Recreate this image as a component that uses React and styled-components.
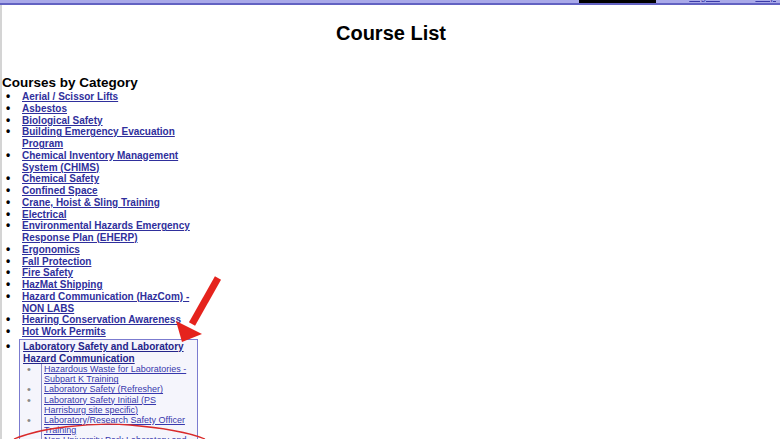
import React from 'react';
import styled, { createGlobalStyle } from 'styled-components';

const GlobalStyle = createGlobalStyle`
  body {
    margin: 0;
    background: #fff;
    font-family: "Liberation Sans", Arial, sans-serif;
  }
`;

const Page = styled.div`
  position: relative;
  height: 439px;
  overflow: hidden;
  background: #fff;
`;

const TopBar = styled.div`
  height: 3px;
  background: #a9a9e9;
  border-bottom: 2px solid #6262c2;
  display: flex;
  justify-content: flex-end;
  align-items: flex-end;
  overflow: hidden;
  padding-right: 4px;
`;

const BarText = styled.span`
  font-size: 10px;
  line-height: 10px;
  color: ${(p) => (p.$link ? '#3a3aa8' : '#55557a')};
  text-decoration: ${(p) => (p.$link ? 'underline' : 'none')};
  margin-left: ${(p) => p.$gap || 0}px;
  margin-bottom: 1px;
  white-space: pre;
`;

const BarBox = styled.span`
  display: inline-block;
  width: 77px;
  height: 10px;
  background: #000;
  margin-left: 5px;
`;

const Body = styled.div`
  border-left: 2px solid #d4d4d4;
  height: 434px;
`;

const Title = styled.h1`
  margin: 0;
  padding-top: 17px;
  text-align: center;
  font-size: 20px;
  line-height: 23px;
  font-weight: bold;
  color: #000;
`;

const Heading = styled.h2`
  margin: 30px 0 0;
  font-size: 13.5px;
  line-height: 16px;
  font-weight: bold;
  color: #000;
`;

const List = styled.ul`
  list-style: none;
  margin: 0;
  padding: 0;
  width: 196px;
`;

const Item = styled.li`
  display: flex;
  font-size: 10px;
  line-height: 11.75px;
  font-weight: bold;

  &::before {
    content: "•";
    flex: 0 0 20px;
    padding-left: 4px;
    padding-top: ${(p) => (p.$boxed ? '3px' : '0')};
    box-sizing: border-box;
    font-size: 12px;
    color: #000;
  }
`;

const Link = styled.a`
  color: ${(p) => p.$color || '#2f2f9c'};
  text-decoration: underline;
  cursor: pointer;
`;

const Panel = styled.div`
  flex: 1;
  margin: 1px 0 0 -3px;
  border: 1px solid #7b7bcf;
  background: #f5f5fc;
  padding: 1px 0 40px 3px;
`;

const SubList = styled.ul`
  list-style: none;
  margin: 0;
  padding: 0;
`;

const SubItem = styled.li`
  display: grid;
  grid-template-columns: 18px 1fr;
  font-size: 9px;
  line-height: 10.1px;
  font-weight: normal;

  &::before {
    content: "•";
    padding-left: 4px;
    font-size: 11px;
    color: #8a8a8a;
  }
`;

const SubText = styled.div`
  border-left: 1px solid #8e8ec8;
  padding-left: 2px;
  padding-right: 4px;
`;

const Overlay = styled.svg`
  position: absolute;
  left: 0;
  top: 0;
  pointer-events: none;
`;

const courses = [
  'Aerial / Scissor Lifts',
  'Asbestos',
  'Biological Safety',
  'Building Emergency Evacuation Program',
  'Chemical Inventory Management System (CHIMS)',
  'Chemical Safety',
  'Confined Space',
  'Crane, Hoist & Sling Training',
  'Electrical',
  'Environmental Hazards Emergency Response Plan (EHERP)',
  'Ergonomics',
  'Fall Protection',
  'Fire Safety',
  'HazMat Shipping',
  'Hazard Communication (HazCom) - NON LABS',
  'Hearing Conservation Awareness',
  'Hot Work Permits',
];

const labCourses = [
  'Hazardous Waste for Laboratories - Subpart K Training',
  'Laboratory Safety (Refresher)',
  'Laboratory Safety Initial (PS Harrisburg site specific)',
  'Laboratory/Research Safety Officer Training',
  'Non University Park Laboratory and Hazard Communication',
];

export default function App() {
  return (
    <>
      <GlobalStyle />
      <Page>
        <TopBar>
          <BarText>Welcome</BarText>
          <BarBox />
          <BarText $gap={8}>- - -</BarText>
          <BarText $link $gap={10}>Logout</BarText>
          <BarText $gap={10}>- - -</BarText>
          <BarText $link $gap={10}>Help</BarText>
        </TopBar>
        <Body>
          <Title>Course List</Title>
          <Heading>Courses by Category</Heading>
          <List>
            {courses.map((c) => (
              <Item key={c}>
                <Link>{c}</Link>
              </Item>
            ))}
            <Item $boxed>
              <Panel>
                <Link $color="#24248a">Laboratory Safety and Laboratory Hazard Communication</Link>
                <SubList>
                  {labCourses.map((c) => (
                    <SubItem key={c}>
                      <SubText>
                        <Link $color="#3838ad">{c}</Link>
                      </SubText>
                    </SubItem>
                  ))}
                </SubList>
              </Panel>
            </Item>
          </List>
        </Body>
        <Overlay width="780" height="439" viewBox="0 0 780 439">
          <line x1="218" y1="278" x2="192" y2="324" stroke="#e5231d" strokeWidth="7" strokeLinecap="butt" />
          <polygon points="176,321 202,334 182,342" fill="#e5231d" />
          <path d="M14 439 C 40 428, 90 422, 130 425 C 165 428, 190 433, 205 439" fill="none" stroke="#d92a2a" strokeWidth="1.3" />
        </Overlay>
      </Page>
    </>
  );
}
